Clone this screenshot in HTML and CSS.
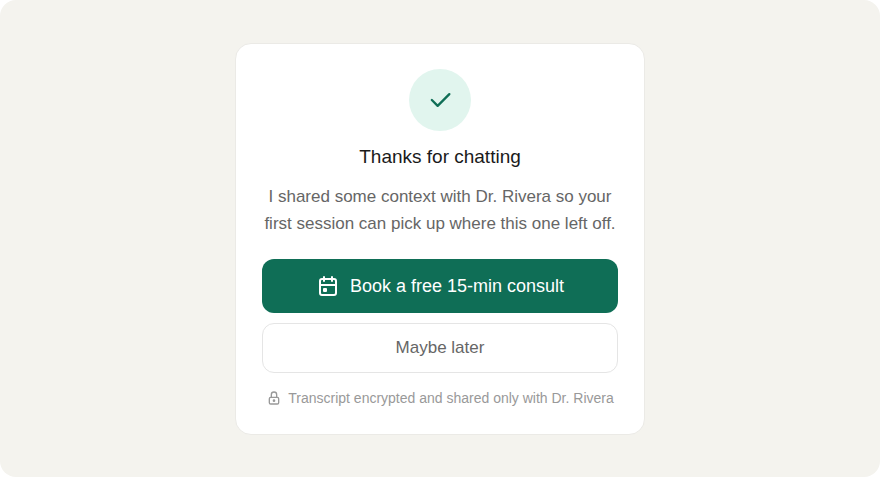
FILE: index.html
```
<!DOCTYPE html>
<html lang="en">
<head>
  <meta charset="UTF-8">
  <meta name="viewport" content="width=device-width, initial-scale=1.0">
  <title>Thanks for chatting</title>
  <link rel="stylesheet" href="styles.css">
</head>
<body>
  <main class="page">
    <section class="card">
      <div class="check">
        <svg width="28" height="28" viewBox="0 0 24 24" fill="none" stroke="currentColor" stroke-width="2" stroke-linecap="round" stroke-linejoin="round" aria-hidden="true">
          <path d="M5 12l5 5l10 -10"/>
        </svg>
      </div>

      <h1>Thanks for chatting</h1>
      <p class="message">I shared some context with Dr. Rivera so your first session can pick up where this one left off.</p>

      <button type="button" class="btn btn-primary">
        <svg width="24" height="24" viewBox="0 0 24 24" fill="none" stroke="currentColor" stroke-width="2" stroke-linecap="round" stroke-linejoin="round" aria-hidden="true">
          <path d="M4 7a2 2 0 0 1 2 -2h12a2 2 0 0 1 2 2v12a2 2 0 0 1 -2 2h-12a2 2 0 0 1 -2 -2z"/>
          <path d="M16 3v4M8 3v4M4 11h16M8 15h2v2h-2z"/>
        </svg>
        Book a free 15-min consult
      </button>
      <button type="button" class="btn btn-secondary">Maybe later</button>

      <p class="privacy">
        <svg width="16" height="16" viewBox="0 0 24 24" fill="none" stroke="currentColor" stroke-width="2" stroke-linecap="round" stroke-linejoin="round" aria-hidden="true">
          <path d="M5 13a2 2 0 0 1 2 -2h10a2 2 0 0 1 2 2v6a2 2 0 0 1 -2 2h-10a2 2 0 0 1 -2 -2z"/>
          <path d="M11 16a1 1 0 1 0 2 0a1 1 0 0 0 -2 0M8 11v-4a4 4 0 1 1 8 0v4"/>
        </svg>
        Transcript encrypted and shared only with Dr. Rivera
      </p>
    </section>
  </main>
</body>
</html>
```
FILE: styles.css
```
* {
  box-sizing: border-box;
}

body {
  margin: 0;
  background-color: #fff;
  font-family: "Liberation Sans", Arial, sans-serif;
}

.page {
  display: flex;
  justify-content: center;
  padding: 43px 16px 42px;
  background-color: #f4f3ee;
  border-radius: 16px;
}

.card {
  width: 100%;
  max-width: 410px;
  padding: 25px 26px 26px;
  background-color: #fff;
  border: 1px solid #ebeae6;
  border-radius: 16px;
  text-align: center;
}

.check {
  display: flex;
  align-items: center;
  justify-content: center;
  width: 62px;
  height: 62px;
  margin: 0 auto 13px;
  border-radius: 50%;
  background-color: #e1f5ee;
  color: #0f6e56;
}

h1 {
  margin: 0 0 14px;
  color: #1a1a1a;
  font-size: 19px;
  font-weight: 400;
  line-height: 25px;
}

.message {
  margin: 0 0 22px;
  color: #666;
  font-size: 17px;
  line-height: 27px;
}

.btn {
  display: flex;
  align-items: center;
  justify-content: center;
  gap: 10px;
  width: 100%;
  border-radius: 12px;
  font-family: inherit;
  line-height: 24px;
  cursor: pointer;
}

.btn-primary {
  margin-bottom: 10px;
  padding: 15px;
  border: 0;
  background-color: #0f6e56;
  color: #fff;
  font-size: 18px;
}

.btn-secondary {
  padding: 12px;
  border: 1px solid #e5e5e5;
  background-color: #fff;
  color: #666;
  font-size: 17px;
}

.privacy {
  display: flex;
  align-items: center;
  justify-content: center;
  gap: 6px;
  margin: 15px 0 0;
  color: #999;
  font-size: 14px;
  line-height: 20px;
}
```
